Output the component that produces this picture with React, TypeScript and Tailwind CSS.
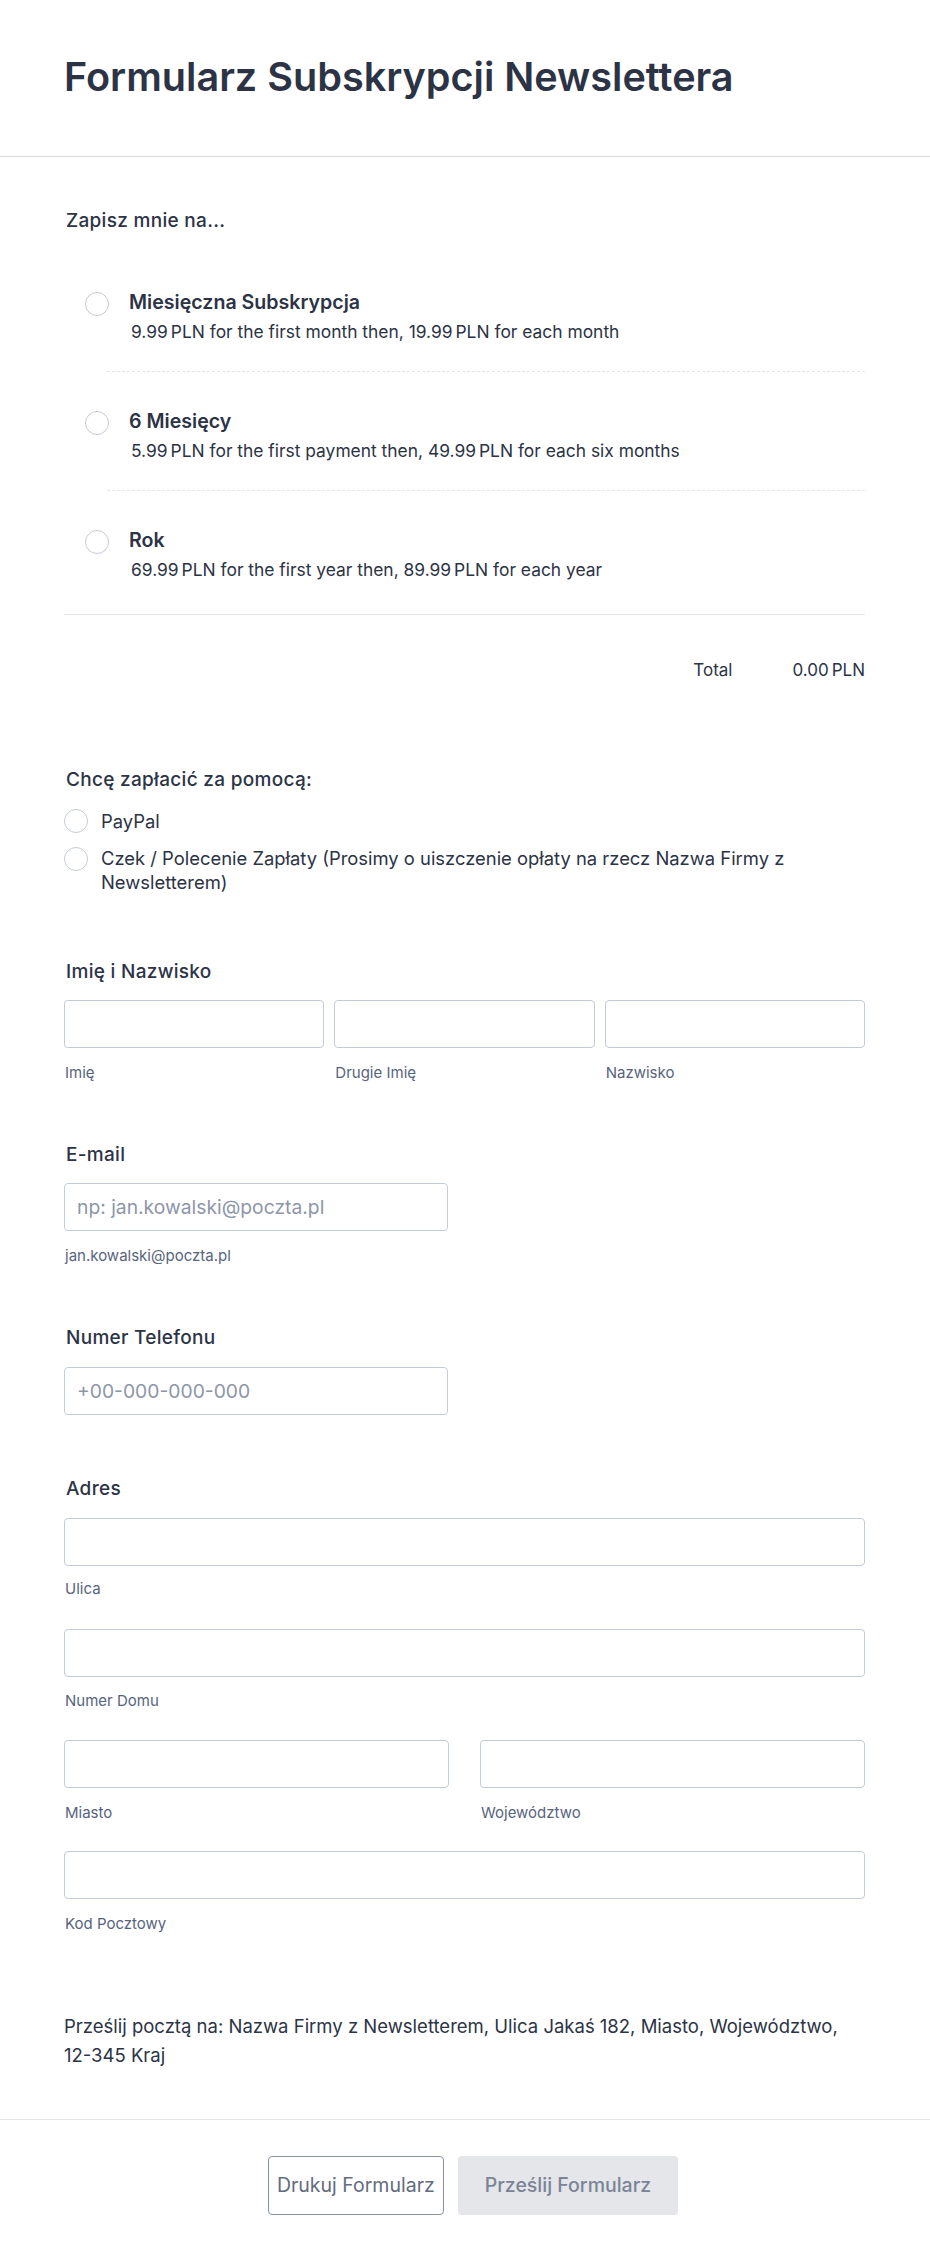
import React from 'react';

type Plan = {
   id: string;
   name: string;
   first: string;
   firstText: string;
   then: string;
   thenText: string;
};

const plans: Plan[] = [
   { id: 'm', name: 'Miesięczna Subskrypcja', first: '9.99', firstText: 'for the first month then,', then: '19.99', thenText: 'for each month' },
   { id: '6m', name: '6 Miesięcy', first: '5.99', firstText: 'for the first payment then,', then: '49.99', thenText: 'for each six months' },
   { id: 'y', name: 'Rok', first: '69.99', firstText: 'for the first year then,', then: '89.99', thenText: 'for each year' },
];

function Radio({ className = '' }: { className?: string }) {
   return <span className={`block w-6 h-6 shrink-0 rounded-full border border-[#c3cad8] bg-white ${className}`} />;
}

function Label({ children, className = '' }: { children: React.ReactNode; className?: string }) {
   return (
      <div className={`text-[19px] leading-[27px] font-medium tracking-[0.3px] text-[#2c3345] pl-0.5 ${className}`}>{children}</div>
   );
}

function Sub({ children, className = '' }: { children: React.ReactNode; className?: string }) {
   return <div className={`text-[15px] leading-[20px] text-[#57647e] pl-px ${className}`}>{children}</div>;
}

function Input({ placeholder, className = '' }: { placeholder?: string; className?: string }) {
   return (
      <input
         type="text"
         placeholder={placeholder}
         className={`block h-12 rounded-[4px] border border-[#c3cad8] bg-white px-3 text-[19.3px] text-[#2c3345] placeholder:text-[#8d96a8] outline-none ${className}`}
      />
   );
}

function Price({ value }: { value: string }) {
   return (
      <span>
         {value}
         <span className="ml-[3px]">PLN</span>
      </span>
   );
}

export default function App() {
   return (
      <div className="min-h-screen bg-white font-['Inter',sans-serif] text-[#2c3345]">
         {/* header */}
         <div className="pt-[54px] pb-[56px] pl-16 border-b border-[#d9dce3]">
            <h1 className="text-[39.6px] leading-[46px] font-semibold text-[#2c3345]">Formularz Subskrypcji Newslettera</h1>
         </div>

         <div className="pl-16 pr-[65px]">
            {/* plans */}
            <Label className="mt-[50px]">Zapisz mnie na...</Label>

            <div className="mt-[56px]">
               {plans.map((p, i) => (
                  <div key={p.id}>
                     {i > 0 && <div className="mt-[27px] mb-[37px] ml-[43px] border-t border-dashed border-[#e3e5ea]" />}
                     <div className="flex items-start pl-[21px]">
                        <Radio className="mt-[2px]" />
                        <div className="ml-[20px]">
                           <div className="text-[19.6px] leading-[24px] font-semibold text-[#2c3345]">{p.name}</div>
                           <div className="mt-[6px] pl-[2px] text-[17.4px] leading-[24px] text-[#2c3345]">
                              <Price value={p.first} /> {p.firstText} <Price value={p.then} /> {p.thenText}
                           </div>
                        </div>
                     </div>
                  </div>
               ))}
            </div>

            <div className="mt-[32px] border-t border-[#e3e5ea]" />

            <div className="mt-[43px] flex justify-end gap-[60px] text-[17px] leading-[24px] text-[#2c3345]">
               <span>Total</span>
               <span>
                  0.00<span className="ml-[3px]">PLN</span>
               </span>
            </div>

            {/* payment */}
            <Label className="mt-[84px]">Chcę zapłacić za pomocą:</Label>
            <div className="mt-[16px] flex items-start gap-[13px]">
               <Radio />
               <span className="text-[18.4px] leading-[24px]">PayPal</span>
            </div>
            <div className="mt-[13px] flex items-start gap-[13px]">
               <Radio className="mt-[1px]" />
               <span className="text-[18.4px] leading-[24px]">
                  Czek / Polecenie Zapłaty (Prosimy o uiszczenie opłaty na rzecz Nazwa Firmy z Newsletterem)
               </span>
            </div>

            {/* name */}
            <Label className="mt-[64px]">Imię i Nazwisko</Label>
            <div className="mt-[15px] grid grid-cols-3 gap-[10px]">
               {['Imię', 'Drugie Imię', 'Nazwisko'].map((s) => (
                  <div key={s}>
                     <Input className="w-full" />
                     <Sub className="mt-[15px]">{s}</Sub>
                  </div>
               ))}
            </div>

            {/* email */}
            <Label className="mt-[58px]">E-mail</Label>
            <Input className="mt-[15px] w-[384px]" placeholder="np: jan.kowalski@poczta.pl" />
            <Sub className="mt-[15px]">jan.kowalski@poczta.pl</Sub>

            {/* phone */}
            <Label className="mt-[58px]">Numer Telefonu</Label>
            <Input className="mt-[16px] w-[384px]" placeholder="+00-000-000-000" />

            {/* address */}
            <Label className="mt-[60px]">Adres</Label>
            <Input className="mt-[16px] w-full" />
            <Sub className="mt-[13px]">Ulica</Sub>
            <Input className="mt-[30px] w-full" />
            <Sub className="mt-[14px]">Numer Domu</Sub>
            <div className="mt-[29px] grid grid-cols-2 gap-[31px]">
               {['Miasto', 'Województwo'].map((s) => (
                  <div key={s}>
                     <Input className="w-full" />
                     <Sub className="mt-[15px]">{s}</Sub>
                  </div>
               ))}
            </div>
            <Input className="mt-[28px] w-full" />
            <Sub className="mt-[15px]">Kod Pocztowy</Sub>

            <p className="mt-[78px] pr-6 text-[18.5px] leading-[29px] text-[#2c3345]">
               Prześlij pocztą na: Nazwa Firmy z Newsletterem, Ulica Jakaś 182, Miasto, Województwo, 12-345 Kraj
            </p>
         </div>

         {/* footer */}
         <div className="mt-[49px] border-t border-[#e3e5ea] pt-[36px] pb-[50px] pl-4 flex justify-center gap-[14px]">
            <button className="h-[59px] px-2 rounded-[4px] border border-[#8b93a3] bg-white text-[19.5px] text-[#636b7e]">
               Drukuj Formularz
            </button>
            <button className="h-[59px] px-[27px] rounded-[4px] bg-[#e4e6ea] text-[19.5px] font-medium text-[#7b8396]">
               Prześlij Formularz
            </button>
         </div>
      </div>
   );
}
